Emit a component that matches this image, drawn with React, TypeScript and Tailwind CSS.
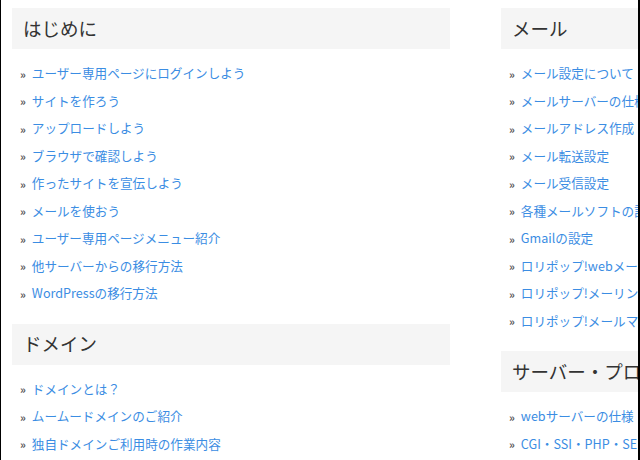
const sections: { title: string; links: string[] }[][] = [
  [
    {
      title: "はじめに",
      links: [
        "ユーザー専用ページにログインしよう",
        "サイトを作ろう",
        "アップロードしよう",
        "ブラウザで確認しよう",
        "作ったサイトを宣伝しよう",
        "メールを使おう",
        "ユーザー専用ページメニュー紹介",
        "他サーバーからの移行方法",
        "WordPressの移行方法",
      ],
    },
    {
      title: "ドメイン",
      links: ["ドメインとは？", "ムームードメインのご紹介", "独自ドメインご利用時の作業内容"],
    },
  ],
  [
    {
      title: "メール",
      links: [
        "メール設定について",
        "メールサーバーの仕様",
        "メールアドレス作成",
        "メール転送設定",
        "メール受信設定",
        "各種メールソフトの設定",
        "Gmailの設定",
        "ロリポップ!webメール",
        "ロリポップ!メーリングリスト",
        "ロリポップ!メールマガジン",
      ],
    },
    {
      title: "サーバー・プログラム",
      links: ["webサーバーの仕様", "CGI・SSI・PHP・SENDMAIL", "データベース"],
    },
  ],
];

function Section({ title, links }: { title: string; links: string[] }) {
  return (
    <section className="mb-4">
      <h2 className="flex h-[41px] items-center bg-[#f5f5f5] pl-[11px] text-[18.5px] font-normal text-[#333]">
        {title}
      </h2>
      <ul className="mt-[11px]">
        {links.map((link) => (
          <li key={link} className="flex h-[27.5px] items-center whitespace-nowrap pl-2">
            <span className="mr-[6px] text-[11px] font-bold text-[#555]">»</span>
            <a href="#" className="text-[12.6px] text-[#3b8de3]">
              {link}
            </a>
          </li>
        ))}
      </ul>
    </section>
  );
}

export default function App() {
  return (
    <div
      className="h-[460px] w-[640px] overflow-hidden border-l border-r-2 border-black bg-white"
      style={{ fontFamily: '"Noto Sans CJK JP", "Noto Sans", sans-serif' }}
    >
      <div className="flex gap-[51px] pl-[11px] pt-2">
        {sections.map((col, i) => (
          <div key={i} className="w-[438px] shrink-0">
            {col.map((s) => (
              <Section key={s.title} title={s.title} links={s.links} />
            ))}
          </div>
        ))}
      </div>
    </div>
  );
}
